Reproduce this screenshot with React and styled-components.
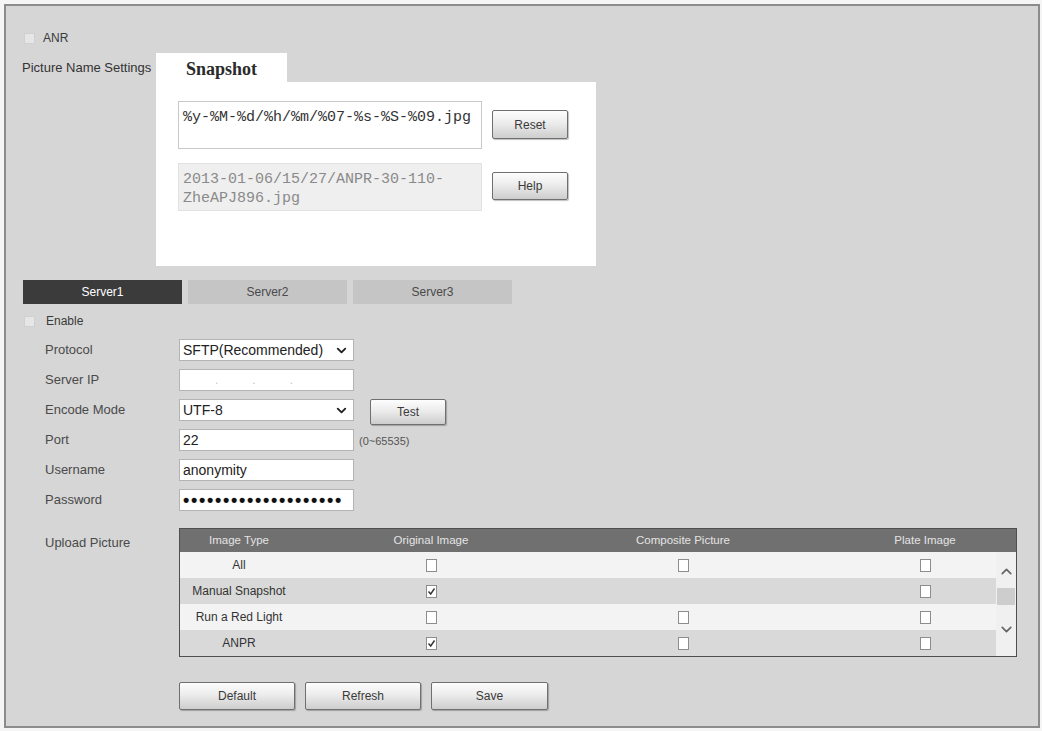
import React from 'react';
import styled, { createGlobalStyle } from 'styled-components';
import { ChevronDown, ChevronUp } from 'lucide-react';

const GlobalStyle = createGlobalStyle`
  body {
    margin: 0;
    padding: 4px;
    background: #f5f5f5;
    font-family: "Liberation Sans", Arial, sans-serif;
  }
`;

const Frame = styled.div`
  box-sizing: border-box;
  width: 1036px;
  height: 724px;
  border: 2px solid #8c8c8c;
  background: #d6d6d6;
  padding: 25px 0 0 17px;
  color: #444;
`;

const CheckRow = styled.div`
  display: flex;
  align-items: center;
  gap: 8px;
  height: 14px;
  margin-top: ${({ $mt }) => $mt || 0}px;
  padding-left: 1px;
  font-size: 12px;
  color: #3a3a3a;
`;

const Box = styled.span`
  width: 9px;
  height: 9px;
  background: #e6e6e6;
  border: 1px solid #d0d0d0;
`;

const NameRow = styled.div`
  display: flex;
  margin-top: 8px;
`;

const NameLabel = styled.div`
  width: 134px;
  height: 29px;
  line-height: 29px;
  margin-left: -1px;
  font-size: 13px;
  color: #333;
  white-space: nowrap;
`;

const SnapBox = styled.div`
  display: flex;
  flex-direction: column;
`;

const SnapTab = styled.div`
  width: 131px;
  height: 29px;
  box-sizing: border-box;
  padding-left: 30px;
  line-height: 33px;
  background: #fff;
  font-family: "Liberation Serif", "Times New Roman", serif;
  font-weight: bold;
  font-size: 18px;
  color: #2a2a2a;
`;

const SnapPanel = styled.div`
  box-sizing: border-box;
  width: 440px;
  height: 184px;
  background: #fff;
  padding: 19px 22px;
  display: flex;
  flex-direction: column;
  gap: 14px;
`;

const SnapLine = styled.div`
  display: flex;
  align-items: flex-start;
  gap: 10px;
`;

const NameBox = styled.div`
  box-sizing: border-box;
  width: 304px;
  height: 48px;
  padding: 6px 4px;
  border: 1px solid ${({ $preview }) => ($preview ? '#e2e2e2' : '#c8c8c8')};
  background: ${({ $preview }) => ($preview ? '#efefef' : '#fff')};
  color: ${({ $preview }) => ($preview ? '#8a8a8a' : '#333')};
  font-family: "Liberation Mono", "Courier New", monospace;
  font-size: 15px;
  line-height: 19px;
`;

const Button = styled.button`
  box-sizing: border-box;
  width: ${({ $w }) => $w || 76}px;
  height: ${({ $h }) => $h || 29}px;
  margin-top: ${({ $mt }) => $mt || 0}px;
  margin-left: ${({ $ml }) => $ml || 0}px;
  padding: 0;
  border: 1px solid #6f6f6f;
  border-radius: 2px;
  background: linear-gradient(#fdfdfd, #ececec 45%, #cdcdcd);
  box-shadow: 1px 1px 1px rgba(0, 0, 0, 0.25);
  font-family: "Liberation Sans", Arial, sans-serif;
  font-size: 12px;
  color: #3a3a3a;
`;

const ServerTabs = styled.div`
  display: flex;
  gap: 6px;
  margin-top: 14px;
`;

const ServerTab = styled.div`
  width: 159px;
  height: 24px;
  line-height: 24px;
  text-align: center;
  font-size: 12px;
  background: ${({ $active }) => ($active ? '#3b3b3b' : '#c5c5c5')};
  color: ${({ $active }) => ($active ? '#fff' : '#4a4a4a')};
`;

const Form = styled.div`
  display: flex;
  flex-direction: column;
  gap: 8px;
  margin: 11px 0 0 22px;
`;

const Row = styled.div`
  display: flex;
  align-items: flex-start;
  height: ${({ $h }) => $h || 22}px;
  margin-top: ${({ $mt }) => $mt || 0}px;
`;

const Label = styled.div`
  width: 134px;
  flex-shrink: 0;
  height: 22px;
  line-height: 22px;
  padding-top: ${({ $pt }) => $pt || 0}px;
  font-size: 13px;
  color: #4a4a4a;
`;

const Field = styled.div`
  box-sizing: border-box;
  width: 175px;
  height: 22px;
  display: flex;
  align-items: center;
  justify-content: space-between;
  padding: 0 4px 0 3px;
  border: 1px solid #b4b4b4;
  background: #fff;
  font-size: 14px;
  color: #222;
  overflow: hidden;
  white-space: nowrap;
`;

const IpDots = styled.div`
  display: flex;
  gap: 34px;
  padding-left: 32px;
  color: #c4c4c4;
  font-size: 12px;
`;

const Dots = styled.span`
  font-size: 18px;
  line-height: 18px;
  font-weight: bold;
  letter-spacing: 1.7px;
  color: #111;
`;

const Hint = styled.span`
  margin-left: 5px;
  line-height: 24px;
  font-size: 11px;
  color: #555;
`;

const Table = styled.div`
  box-sizing: border-box;
  width: 838px;
  border: 1px solid #4f4f4f;
  font-size: 12px;
`;

const Head = styled.div`
  display: grid;
  grid-template-columns: 118px 266px 238px 1fr;
  height: 23px;
  line-height: 22px;
  background: #707070;
  color: #e4e4e4;
  font-size: 11.5px;
`;

const Body = styled.div`
  display: flex;
`;

const Rows = styled.div`
  flex: 1;
`;

const TRow = styled.div`
  display: grid;
  grid-template-columns: 118px 266px 238px 1fr;
  height: 26px;
  align-items: center;
  background: ${({ $alt }) => ($alt ? '#d9d9d9' : '#f3f3f3')};
  color: #333;
`;

const Cell = styled.div`
  display: flex;
  justify-content: center;
  padding-left: ${({ $pl }) => $pl || 0}px;
`;

const Tick = styled.span`
  box-sizing: border-box;
  width: 11px;
  height: 13px;
  border: 1px solid #8d8d8d;
  background: #fff;
  display: flex;
  align-items: center;
  justify-content: center;
`;

const Scroll = styled.div`
  width: 20px;
  display: flex;
  flex-direction: column;
  align-items: center;
  background: #f0f0f0;
  color: #666;
`;

const Thumb = styled.div`
  width: 18px;
  height: 17px;
  margin: 8px 0 16px;
  background: #cdcdcd;
`;

const Actions = styled.div`
  display: flex;
  gap: 10px;
  margin: 27px 0 0 156px;
`;

function CheckCell({ on, pl }) {
  return (
    <Cell $pl={pl}>
      <Tick>
        {on && (
          <svg width="9" height="9" viewBox="0 0 9 9">
            <path d="M1.5 4.5 L3.7 7 L7.5 1.5" fill="none" stroke="#333" strokeWidth="1.4" />
          </svg>
        )}
      </Tick>
    </Cell>
  );
}

const rows = [
  { name: 'All', orig: false, comp: false },
  { name: 'Manual Snapshot', orig: true, comp: null },
  { name: 'Run a Red Light', orig: false, comp: false },
  { name: 'ANPR', orig: true, comp: false },
];

export default function App() {
  return (
    <>
      <GlobalStyle />
      <Frame>
        <CheckRow>
          <Box />
          <span>ANR</span>
        </CheckRow>

        <NameRow>
          <NameLabel>Picture Name Settings</NameLabel>
          <SnapBox>
            <SnapTab>Snapshot</SnapTab>
            <SnapPanel>
              <SnapLine>
                <NameBox>%y-%M-%d/%h/%m/%07-%s-%S-%09.jpg</NameBox>
                <Button $mt={9}>Reset</Button>
              </SnapLine>
              <SnapLine>
                <NameBox $preview>2013-01-06/15/27/ANPR-30-110-ZheAPJ896.jpg</NameBox>
                <Button $mt={9} $h={28}>Help</Button>
              </SnapLine>
            </SnapPanel>
          </SnapBox>
        </NameRow>

        <ServerTabs>
          <ServerTab $active>Server1</ServerTab>
          <ServerTab>Server2</ServerTab>
          <ServerTab>Server3</ServerTab>
        </ServerTabs>

        <CheckRow $mt={10}>
          <Box />
          <span style={{ marginLeft: 3 }}>Enable</span>
        </CheckRow>

        <Form>
          <Row>
            <Label>Protocol</Label>
            <Field>
              SFTP(Recommended)
              <ChevronDown size={15} strokeWidth={3} color="#222" />
            </Field>
          </Row>
          <Row>
            <Label>Server IP</Label>
            <Field>
              <IpDots>
                <span>.</span>
                <span>.</span>
                <span>.</span>
              </IpDots>
            </Field>
          </Row>
          <Row>
            <Label>Encode Mode</Label>
            <Field>
              UTF-8
              <ChevronDown size={15} strokeWidth={3} color="#222" />
            </Field>
            <Button $h={26} $w={76} $ml={16}>Test</Button>
          </Row>
          <Row>
            <Label>Port</Label>
            <Field>22</Field>
            <Hint>(0~65535)</Hint>
          </Row>
          <Row>
            <Label>Username</Label>
            <Field>anonymity</Field>
          </Row>
          <Row>
            <Label>Password</Label>
            <Field>
              <Dots>{'•'.repeat(20)}</Dots>
            </Field>
          </Row>
          <Row $h={127} $mt={9}>
            <Label $pt={4}>Upload Picture</Label>
            <Table>
              <Head>
                <Cell>Image Type</Cell>
                <Cell>Original Image</Cell>
                <Cell>Composite Picture</Cell>
                <Cell $pl={32}>Plate Image</Cell>
              </Head>
              <Body>
                <Rows>
                  {rows.map((r, i) => (
                    <TRow key={r.name} $alt={i % 2 === 1}>
                      <Cell>{r.name}</Cell>
                      <CheckCell on={r.orig} />
                      {r.comp === null ? <Cell /> : <CheckCell on={r.comp} />}
                      <CheckCell on={false} pl={52} />
                    </TRow>
                  ))}
                </Rows>
                <Scroll>
                  <ChevronUp size={17} strokeWidth={2.4} style={{ marginTop: 11 }} />
                  <Thumb />
                  <ChevronDown size={17} strokeWidth={2.4} />
                </Scroll>
              </Body>
            </Table>
          </Row>
        </Form>

        <Actions>
          <Button $w={116} $h={28}>Default</Button>
          <Button $w={116} $h={28}>Refresh</Button>
          <Button $w={117} $h={28}>Save</Button>
        </Actions>
      </Frame>
    </>
  );
}
